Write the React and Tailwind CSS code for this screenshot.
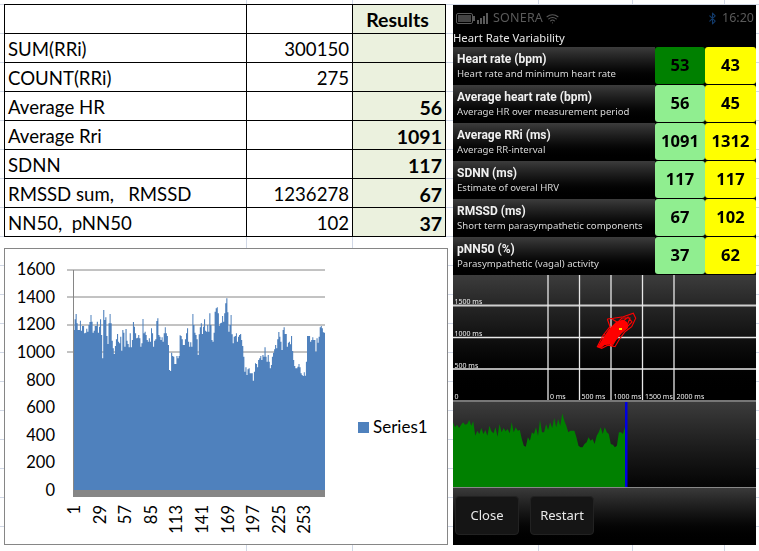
import React from 'react';
import { Bluetooth, Wifi } from 'lucide-react';

const tableRows = [
  ['', '', 'Results'],
  ['SUM(RRi)', '300150', ''],
  ['COUNT(RRi)', '275', ''],
  ['Average HR', '', '56'],
  ['Average Rri', '', '1091'],
  ['SDNN', '', '117'],
  ['RMSSD sum,   RMSSD', '1236278', '67'],
  ['NN50,  pNN50', '102', '37'],
];

const hrvRows = [
  ['Heart rate (bpm)', 'Heart rate and minimum heart rate', '53', '43', true],
  ['Average heart rate (bpm)', 'Average HR over measurement period', '56', '45'],
  ['Average RRi (ms)', 'Average RR-interval', '1091', '1312'],
  ['SDNN (ms)', 'Estimate of overal HRV', '117', '117'],
  ['RMSSD (ms)', 'Short term parasympathetic components', '67', '102'],
  ['pNN50 (%)', 'Parasympathetic (vagal) activity', '37', '62'],
];

// traced from the chart, y offset from y=290 in 3x crop units
const barTops = [120,88,72,100,120,120,92,122,108,108,130,128,116,125,105,96,75,95,128,122,108,108,95,128,110,88,135,205,60,90,82,138,162,100,72,100,152,175,192,168,148,132,155,160,140,182,120,128,170,117,152,162,172,130,172,150,96,110,130,145,143,135,145,170,160,87,130,125,135,150,155,145,155,115,130,170,152,148,93,85,135,140,150,142,155,130,112,130,138,165,240,243,188,198,200,222,222,198,205,198,136,138,148,165,165,148,130,115,155,170,157,170,72,105,128,135,148,195,133,112,100,132,110,88,122,125,105,125,70,105,150,155,128,65,55,52,70,108,100,98,78,95,70,40,25,67,125,105,75,133,160,140,138,130,155,140,135,132,150,168,200,245,232,255,238,235,250,250,250,272,245,220,222,232,210,205,198,210,195,200,172,200,215,195,215,235,225,200,188,178,165,175,148,126,140,155,180,120,112,132,132,170,158,155,163,138,183,210,228,235,235,230,222,232,250,255,258,247,257,215,138,138,138,155,150,142,150,150,185,145,158,140,112,108,115,127,128];

// same idea, y offset from y=405
const greenTops = [55,70,62,72,62,55,62,60,48,65,52,95,80,90,72,90,78,95,65,82,88,70,98,60,85,72,82,75,88,55,85,70,80,78,105,125,128,100,110,85,90,70,95,48,85,85,60,78,55,72,42,70,45,65,28,50,65,85,80,80,80,100,125,130,130,120,115,100,110,105,120,95,85,70,90,70,85,90,120,122,130,125,85,85,90,68];

const stepPath = (tops, x0, width, baseY, toY) => {
  const step = width / tops.length;
  let d = `M${x0} ${baseY}`;
  tops.forEach((t, i) => {
    d += `L${(x0 + i * step).toFixed(1)} ${toY(t).toFixed(1)}L${(x0 + (i + 1) * step).toFixed(1)} ${toY(t).toFixed(1)}`;
  });
  return d + `L${x0 + width} ${baseY}Z`;
};

const linePath = (tops, x0, width, baseY, toY) => {
  const step = width / (tops.length - 1);
  const pts = tops.map((t, i) => `L${(x0 + i * step).toFixed(1)} ${toY(t).toFixed(1)}`).join('');
  return `M${x0} ${baseY}${pts}L${x0 + width} ${baseY}Z`;
};

const yLabels = [
  ['1600', 20], ['1400', 48], ['1200', 75], ['1000', 103], ['800', 131],
  ['600', 158], ['400', 186], ['200', 213], ['0', 241],
];
const xLabels = [['1', 70], ['29', 96], ['57', 121], ['85', 147], ['113', 172], ['141', 198], ['169', 224], ['197', 249], ['225', 275], ['253', 300]];

const Chart = () => (
  <div className="w-[444px] h-[297px] mt-[11px] bg-white border border-[#868686] overflow-hidden">
    <svg width="442" height="295" viewBox="5 249 442 295" className="block font-['Lato',sans-serif]">
      {[270, 297, 325, 352].map((y) => (
        <line key={y} x1="67" x2="325" y1={y} y2={y} stroke="#868686" strokeWidth="1" />
      ))}
      <path d={stepPath(barTops, 73.5, 251.5, 491, (t) => 290 + t / 3)} fill="#4f81bd" />
      <line x1="73.5" x2="73.5" y1="270" y2="490" stroke="#868686" />
      <rect x="73" y="490" width="252" height="7" fill="#868686" />
      {yLabels.map(([t, y]) => (
        <text key={t} x="55" y={y + 255} textAnchor="end" fontSize="16.5" fill="#000">{t}</text>
      ))}
      {xLabels.map(([t, x]) => (
        <text key={t} transform={`translate(${x + 10} 505) rotate(-90)`} textAnchor="end" fontSize="16.5" fill="#000">{t}</text>
      ))}
      <rect x="358" y="422" width="11" height="11" fill="#4f81bd" />
      <text x="373" y="433" fontSize="17" fill="#000">Series1</text>
    </svg>
  </div>
);

const ExcelTable = () => (
  <table className="w-[442px] border-collapse table-fixed font-['Lato',sans-serif] text-[18.6px] text-black">
    <colgroup>
      <col className="w-[242px]" />
      <col className="w-[106px]" />
      <col className="w-[93px]" />
    </colgroup>
    <tbody>
      {tableRows.map((row, i) => (
        <tr key={i} className="h-[29px]">
          <td className="border border-black bg-white pl-[3px] pr-0 pb-0 pt-[3px] whitespace-pre leading-none">{row[0]}</td>
          <td className="border border-black bg-white pr-[3px] pl-0 pb-0 pt-[3px] text-right leading-none">{row[1]}</td>
          <td className={`border border-black bg-[#ebf1de] font-bold text-[19.5px] pl-0 pb-0 pr-[3px] leading-none ${i === 0 ? 'text-center pt-[1px]' : 'text-right pt-[3px]'}`}>{row[2]}</td>
        </tr>
      ))}
    </tbody>
  </table>
);

const StatusBar = () => (
  <div className="h-[27px] flex items-center pl-[3px] pr-[2px] text-[#5a5a5a] text-[12.5px]">
    <svg width="19" height="11" viewBox="0 0 19 11">
      <rect x="0.5" y="0.5" width="16" height="10" rx="1.5" fill="none" stroke="#5a5a5a" />
      <rect x="2" y="2" width="13" height="7" fill="#444" />
      <rect x="17" y="3" width="2" height="5" fill="#5a5a5a" />
    </svg>
    <svg width="13" height="11" viewBox="0 0 13 11" className="ml-[2px]">
      <rect x="0" y="7" width="2" height="4" fill="#5a5a5a" />
      <rect x="3" y="5" width="2" height="6" fill="#5a5a5a" />
      <rect x="6" y="3" width="2" height="8" fill="#5a5a5a" />
      <rect x="9" y="0" width="2" height="11" fill="#5a5a5a" />
    </svg>
    <span className="ml-[3px] tracking-[0.2px]">SONERA</span>
    <Wifi size={13} strokeWidth={2} className="ml-[3px]" />
    <Bluetooth size={13} strokeWidth={2} className="ml-auto text-[#123a6a]" />
    <span className="ml-[3px]">16:20</span>
  </div>
);

const HrvRow = ({ title, sub, a, b, dark }) => (
  <div className="flex h-[38px] border-b border-black">
    <div className="w-[202px] pl-[4px] bg-gradient-to-b from-[#3c3c3c] to-black flex flex-col justify-center">
      <div className="text-[12px] leading-[15px] font-bold text-[#f0f0f0] font-['Roboto',sans-serif]">{title}</div>
      <div className="text-[9.6px] leading-[13px] text-[#d8d8d8]">{sub}</div>
    </div>
    <div className={`w-[50px] rounded-[3px] flex items-center justify-center font-bold text-[16.5px] text-black ${dark ? 'bg-[#008000]' : 'bg-[#90ee90]'}`}>{a}</div>
    <div className="w-[51px] rounded-[3px] bg-[#ffff00] flex items-center justify-center font-bold text-[16.5px] text-black">{b}</div>
  </div>
);

const PoincarePlot = () => (
  <div className="h-[127px] bg-gradient-to-b from-[#3c3c3c] to-black border-b-2 border-[#777] overflow-hidden">
    <svg width="303" height="125" viewBox="453 275 303 125" className="block font-['Noto_Sans',sans-serif]">
      <line x1="453" x2="756" y1="305.5" y2="305.5" stroke="#cfcfcf" strokeWidth="2" />
      {[337.5, 369].map((y) => (
        <line key={y} x1="453" x2="756" y1={y} y2={y} stroke="#e8e8e8" strokeWidth="1.3" />
      ))}
      {[548, 579.5, 611, 642.5, 674].map((x) => (
        <line key={x} x1={x} x2={x} y1="274" y2="401" stroke="#e8e8e8" strokeWidth="1.3" />
      ))}
      <g fill="#f0f0f0" fontSize="7">
        <text x="454.5" y="304">1500 ms</text>
        <text x="454.5" y="336">1000 ms</text>
        <text x="454.5" y="368">500 ms</text>
        <text x="454.5" y="399">0</text>
        <text x="550" y="399">0 ms</text>
        <text x="581.5" y="399">500 ms</text>
        <text x="613.5" y="399">1000 ms</text>
        <text x="645" y="399">1500 ms</text>
        <text x="676.5" y="399">2000 ms</text>
      </g>
      <g fill="none" stroke="#f00" strokeWidth="1.1">
        <polyline points="607.3,319 613.3,318.3 623.3,316.7 633.3,313.3 635.7,318.3 631.7,326.7 625,331.7 620,338.3 615,346.7 608.3,345 601.7,348.3 597.3,346.7 603.3,335 610,326.7 607.3,319" />
        <polyline points="612,319 620,324 628,317 632,322 626,328 630,318 622,318 616,324" />
        <polyline points="598,347 606,338 604,344 612,346 618,336 610,342 604,334" />
      </g>
      <polygon points="597.5,347 603,338 609,329 616,322 623,319.5 627,322 628,328 622,333 617,339 612,345 606,344 601,348" fill="#f00" />
      <rect x="619" y="328" width="3" height="2" fill="#ffe000" />
    </svg>
  </div>
);

const ProgressChart = () => (
  <div className="h-[86px] bg-gradient-to-b from-[#3c3c3c] to-[#050505] border-b border-[#888] overflow-hidden">
    <svg width="303" height="85" viewBox="453 403 303 85" className="block">
      <path d={linePath(greenTops, 453, 172, 488, (t) => 405 + t / 3)} fill="#008000" />
      <rect x="625" y="403" width="2.5" height="85" fill="#0000e0" />
    </svg>
  </div>
);

const PhoneButton = ({ children, className }) => (
  <div className={`h-[39px] w-[64px] rounded-[4px] bg-[#151515] border border-[#222] flex items-center justify-center text-[13px] text-[#e8e8e8] ${className}`}>
    {children}
  </div>
);

const Phone = () => (
  <div className="w-[303px] h-[540px] mt-[5px] ml-[5px] bg-black flex flex-col font-['Noto_Sans',sans-serif] blur-[0.3px]">
    <StatusBar />
    <div className="h-[15px] text-[11.3px] leading-[11px] text-[#e8e8e8]">Heart Rate Variability</div>
    <div className="flex flex-col">
      {hrvRows.map((r) => (
        <HrvRow key={r[0]} title={r[0]} sub={r[1]} a={r[2]} b={r[3]} dark={r[4]} />
      ))}
    </div>
    <PoincarePlot />
    <ProgressChart />
    <div className="flex-1 bg-gradient-to-b from-[#3a3a3a] to-black flex pt-[8px] pl-[2px]">
      <PhoneButton>Close</PhoneButton>
      <PhoneButton className="ml-[11px]">Restart</PhoneButton>
    </div>
  </div>
);

export default function App() {
  return (
    <div className="w-[759px] h-[551px] overflow-hidden flex bg-white [background-image:repeating-linear-gradient(to_bottom,transparent_0,transparent_4px,#d0d7e5_4px,#d0d7e5_5px,transparent_5px,transparent_29px),linear-gradient(to_right,transparent_246px,#d0d7e5_246px,#d0d7e5_247px,transparent_247px,transparent_352px,#d0d7e5_352px,#d0d7e5_353px,transparent_353px,transparent_538px,#d0d7e5_538px,#d0d7e5_539px,transparent_539px,transparent_632px,#d0d7e5_632px,#d0d7e5_633px,transparent_633px,transparent_724px,#d0d7e5_724px,#d0d7e5_725px,transparent_725px)]">
      <div className="w-[448px] pl-[4px] pt-[4px]">
        <ExcelTable />
        <Chart />
      </div>
      <Phone />
    </div>
  );
}
